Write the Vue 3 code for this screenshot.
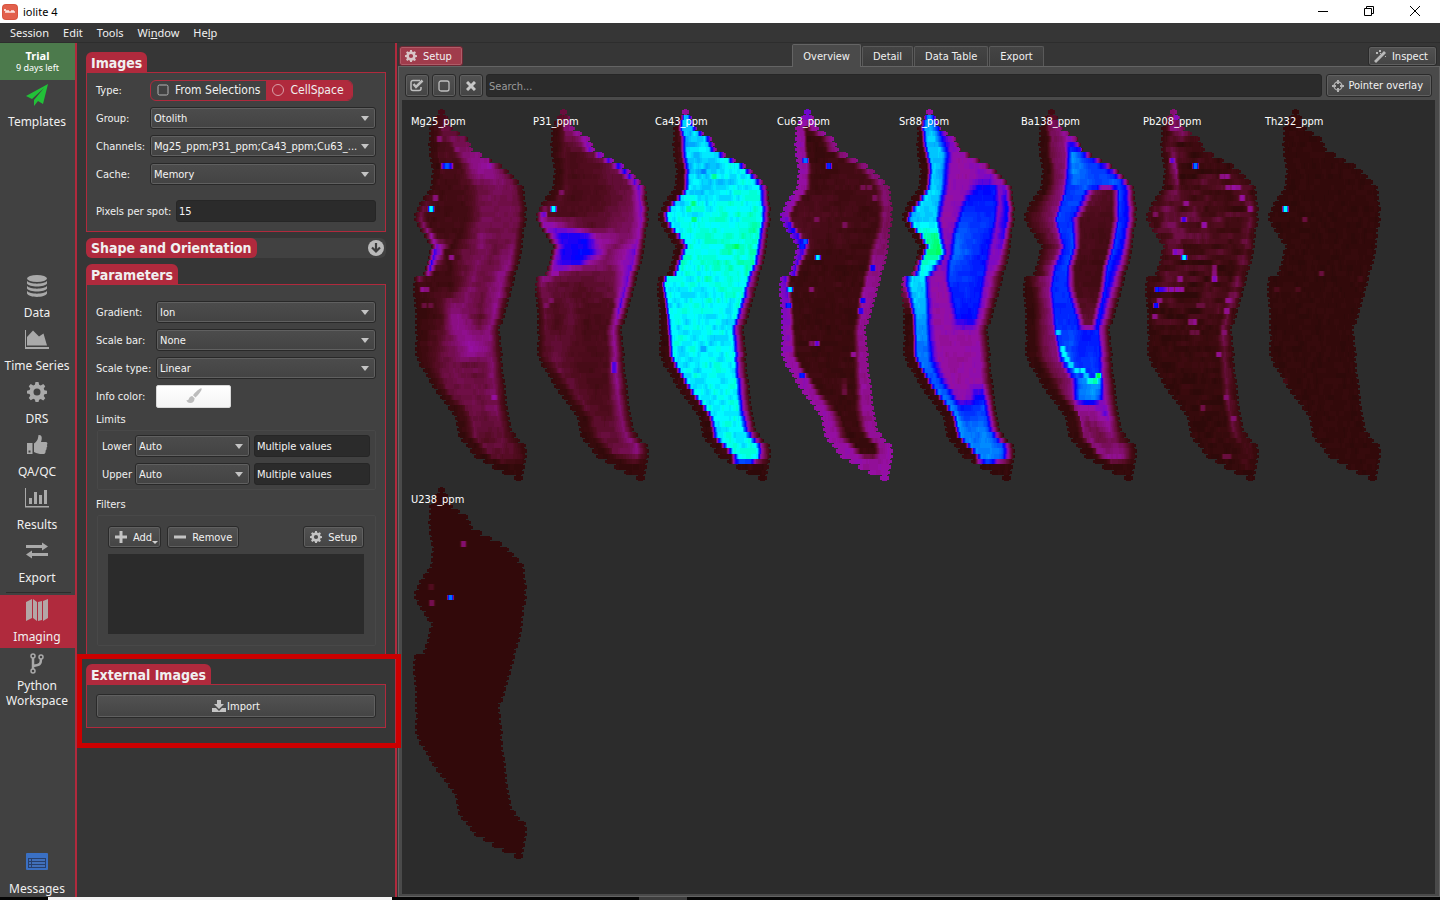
<script setup>
import { ref } from 'vue'

const menus = [
  ['Session', '', ''],
  ['Edit', '', ''],
  ['Tools', '', ''],
  ['Wi', 'n', 'dow'],
  ['He', 'l', 'p'],
]
const navItems = [
  { id: 'data', label: 'Data' },
  { id: 'series', label: 'Time Series' },
  { id: 'drs', label: 'DRS' },
  { id: 'qa', label: 'QA/QC' },
  { id: 'results', label: 'Results' },
  { id: 'export', label: 'Export' },
]
const tabs = ['Overview', 'Detail', 'Data Table', 'Export']
const activeTab = ref('Overview')
const pixelsPerSpot = ref('15')
const sourceType = ref('cell')

const gearPath =
  'M6.8 0h2.4l.5 2.2 1.3.6 2-1.2 1.6 1.7-1.2 1.9.5 1.3 2.1.5v2.3l-2.1.5-.5 1.3 1.2 1.9-1.6 1.7-2-1.2-1.3.6L9.200 16H6.8l-.5-2.100-1.300-.6-2 1.200-1.600-1.700 1.200-1.900-.5-1.300L0 9.200V6.900l2.100-.5.5-1.300L1.400 3.300 3 1.600l2 1.200 1.300-.6zM8 5.200a2.800 2.800 0 1 0 0 5.600 2.800 2.800 0 1 0 0-5.600z'

/* Section outline: left and right edge of each laser line, in thirds of a pixel */
const lefts = [115, 105, 95, 88, 87, 86, 85, 86, 88, 91, 94, 95, 92, 92, 90, 82, 70, 58, 50, 43, 43, 50, 60, 72, 82, 93, 88, 85, 80, 76, 70, 43, 38, 39, 40, 43, 43, 44, 46, 46, 46, 46, 47, 46, 46, 46, 50, 58, 68, 77, 87, 97, 108, 121, 133, 145, 157, 164, 167, 171, 173, 184, 197, 210, 222, 250, 277, 306, 343]
const rights = [134, 143, 150, 160, 180, 204, 212, 218, 245, 275, 306, 326, 341, 358, 371, 374, 374, 377, 380, 378, 380, 377, 373, 372, 369, 368, 365, 362, 360, 354, 347, 344, 342, 336, 333, 326, 323, 317, 314, 308, 301, 300, 302, 304, 306, 308, 306, 310, 310, 311, 314, 317, 317, 320, 321, 323, 326, 330, 333, 337, 347, 360, 377, 380, 380, 377, 375, 371, 368]

const ion = [
  [0, 46, 9, 9], [0.06, 60, 10, 14], [0.14, 82, 12, 32], [0.22, 112, 14, 72], [0.3, 136, 15, 122],
  [0.37, 150, 15, 164], [0.44, 120, 8, 200], [0.5, 60, 0, 235], [0.56, 0, 0, 255], [0.65, 0, 60, 255],
  [0.74, 0, 130, 255], [0.81, 0, 190, 255], [0.87, 0, 255, 255], [0.94, 0, 255, 160], [1, 0, 255, 70],
]
function ionColor(v) {
  let k = 1
  while (k < ion.length - 1 && ion[k][0] < v) k++
  const a = ion[k - 1]
  const b = ion[k]
  const t = Math.max(0, Math.min(1, (v - a[0]) / (b[0] - a[0])))
  return `rgb(${[1, 2, 3].map((c) => Math.round(a[c] + (b[c] - a[c]) * t)).join(',')})`
}

/*
 * keys: [line, positions, values]. A position below 90 counts from the left
 * edge, a negative one from the right edge, anything else is a plain x.
 * spots: [x, y, value], single hot shots.
 */
const channels = [
  {
    name: 'Mg25_ppm', noise: 0.02, streak: 0.02,
    keys: [
      [0, [0, 20, 30, 115, 125, -30, -12, -1], [0.1, 0.1, 0.1, 0.14, 0.14, 0.14, 0.14, 0.1]],
      [3, [0, 20, 35, 120, 130, -40, -12, -1], [0.03, 0.06, 0.13, 0.18, 0.18, 0.16, 0.18, 0.1]],
      [10, [0, 25, 110, 180, 215, 270, -20, -1], [0.03, 0.06, 0.11, 0.1, 0.31, 0.36, 0.22, 0.1]],
      [14, [0, 20, 130, 200, 230, 290, -25, -1], [0.03, 0.07, 0.08, 0.12, 0.2, 0.25, 0.2, 0.04]],
      [19, [0, 20, 40, 200, 250, 300, -25, -1], [0.06, 0.22, 0.07, 0.09, 0.22, 0.24, 0.22, 0.03]],
      [23, [0, 22, 40, 180, 240, 290, -30, -1], [0.03, 0.35, 0.1, 0.06, 0.26, 0.2, 0.22, 0.03]],
      [26, [0, 14, 32, 48, 240, 280, -30, -1], [0.05, 0.5, 0.42, 0.07, 0.26, 0.2, 0.28, 0.03]],
      [29, [0, 14, 32, 150, 230, 260, -34, -1], [0.05, 0.54, 0.12, 0.07, 0.25, 0.2, 0.31, 0.03]],
      [32, [0, 14, 32, 150, 210, 250, -38, -1], [0.03, 0.06, 0.07, 0.07, 0.25, 0.2, 0.33, 0.03]],
      [38, [0, 25, 120, 155, 185, 240, -32, -1], [0.02, 0.05, 0.09, 0.33, 0.3, 0.16, 0.33, 0.03]],
      [44, [0, 25, 120, 170, 210, 250, -32, -1], [0.02, 0.07, 0.18, 0.25, 0.38, 0.34, 0.26, 0.03]],
      [47, [0, 25, 130, 170, 210, 250, -32, -1], [0.02, 0.08, 0.2, 0.22, 0.2, 0.2, 0.27, 0.03]],
      [55, [0, 25, 50, 190, 220, 250, -34, -1], [0.02, 0.05, 0.16, 0.2, 0.22, 0.2, 0.24, 0.03]],
      [60, [0, 25, 50, 220, 240, 270, -38, -1], [0.02, 0.04, 0.18, 0.2, 0.16, 0.16, 0.18, 0.03]],
      [64, [0, 35, 50, 270, 290, 300, -45, -1], [0.02, 0.03, 0.14, 0.18, 0.18, 0.18, 0.17, 0.03]],
      [66, [0, 35, 50, 290, 300, 310, -45, -1], [0.02, 0.02, 0.02, 0.02, 0.02, 0.02, 0.02, 0.02]],
    ],
    spots: [[118, 298, 0.28], [172, 331, 0.28], [132, 378, 0.5], [150, 378, 0.5], [141, 378, 0.68], [93, 508, 0.87], [106, 475, 0.3], [154, 652, 0.33], [68, 750, 0.35], [80, 750, 0.3], [72, 798, 0.2], [92, 798, 0.2], [282, 1071, 0.36]],
  },
  {
    name: 'P31_ppm', noise: 0.015, streak: 0.015,
    keys: [
      [0, [0, 18, 30, 120, 125, -40, -18, -1], [0.2, 0.2, 0.2, 0.2, 0.2, 0.2, 0.2, 0.2]],
      [3, [0, 18, 35, 125, 140, -40, -18, -1], [0.03, 0.05, 0.15, 0.28, 0.28, 0.28, 0.32, 0.3]],
      [8, [0, 18, 40, 150, 180, -30, -16, -1], [0.03, 0.05, 0.14, 0.11, 0.13, 0.2, 0.46, 0.36]],
      [10, [0, 18, 40, 150, 200, -40, -18, -1], [0.03, 0.05, 0.14, 0.11, 0.13, 0.2, 0.54, 0.36]],
      [13, [0, 25, 40, 150, 240, -45, -20, -1], [0.03, 0.06, 0.14, 0.1, 0.14, 0.2, 0.5, 0.2]],
      [16, [0, 25, 40, 150, 260, -50, -22, -1], [0.03, 0.06, 0.14, 0.1, 0.14, 0.22, 0.44, 0.05]],
      [19, [0, 15, 30, 150, 260, -50, -22, -1], [0.1, 0.36, 0.14, 0.11, 0.17, 0.27, 0.42, 0.05]],
      [21, [0, 15, 40, 110, 200, -50, -22, -1], [0.04, 0.4, 0.4, 0.3, 0.15, 0.26, 0.4, 0.05]],
      [23, [0, 20, 40, 190, 225, -50, -22, -1], [0.04, 0.42, 0.53, 0.53, 0.34, 0.26, 0.4, 0.05]],
      [26, [0, 15, 35, 195, 235, 260, -28, -1], [0.05, 0.4, 0.55, 0.58, 0.42, 0.24, 0.44, 0.04]],
      [28, [0, 15, 35, 170, 205, 250, -28, -1], [0.05, 0.4, 0.5, 0.54, 0.35, 0.24, 0.46, 0.04]],
      [30, [0, 20, 40, 100, 170, -70, -28, -1], [0.15, 0.38, 0.36, 0.26, 0.18, 0.22, 0.46, 0.03]],
      [32, [0, 20, 40, 100, 170, -70, -28, -1], [0.1, 0.26, 0.2, 0.16, 0.15, 0.2, 0.46, 0.03]],
      [36, [0, 22, 100, 150, 190, -50, -28, -1], [0.02, 0.18, 0.12, 0.18, 0.12, 0.15, 0.5, 0.03]],
      [40, [0, 25, 100, 140, 190, -50, -26, -1], [0.02, 0.18, 0.12, 0.18, 0.1, 0.12, 0.36, 0.03]],
      [45, [0, 25, 100, 140, 200, -50, -28, -1], [0.02, 0.14, 0.22, 0.13, 0.1, 0.12, 0.34, 0.03]],
      [50, [0, 25, 50, 160, 200, -60, -30, -1], [0.02, 0.06, 0.18, 0.15, 0.1, 0.12, 0.32, 0.03]],
      [56, [0, 25, 50, 200, 240, -60, -30, -1], [0.02, 0.05, 0.18, 0.17, 0.13, 0.14, 0.28, 0.03]],
      [63, [0, 35, 60, 270, 290, -60, -35, -1], [0.02, 0.03, 0.16, 0.2, 0.2, 0.24, 0.3, 0.03]],
      [66, [0, 35, 60, 290, 300, -60, -35, -1], [0.03, 0.03, 0.03, 0.03, 0.03, 0.03, 0.03, 0.03]],
    ],
    spots: [[94, 508, 0.87], [66, 524, 0.45], [118, 460, 0.26], [87, 784, 0.26], [72, 798, 0.26], [276, 976, 0.48], [276, 991, 0.48]],
  },
  {
    name: 'Ca43_ppm', noise: 0.035, streak: 0.02,
    keys: [
      [0, [0, 10, 14, 16, 18, -30, -20, -12, -1], [0.36, 0.36, 0.36, 0.36, 0.36, 0.36, 0.36, 0.36, 0.36]],
      [1, [0, 4, 8, 12, 15, -12, -8, -4, -1], [0.03, 0.1, 0.35, 0.55, 0.82, 0.82, 0.6, 0.5, 0.4]],
      [5, [0, 22, 28, 34, 40, -22, -14, -8, -1], [0.03, 0.06, 0.35, 0.55, 0.8, 0.83, 0.55, 0.45, 0.3]],
      [10, [0, 22, 28, 34, 42, -24, -18, -10, -1], [0.03, 0.06, 0.35, 0.55, 0.81, 0.87, 0.6, 0.45, 0.3]],
      [15, [0, 28, 34, 40, 46, -28, -20, -10, -1], [0.03, 0.06, 0.35, 0.55, 0.84, 0.88, 0.55, 0.36, 0.1]],
      [19, [0, 12, 18, 23, 28, -28, -20, -12, -1], [0.03, 0.06, 0.35, 0.55, 0.87, 0.9, 0.55, 0.36, 0.05]],
      [24, [0, 22, 30, 36, 42, -30, -22, -15, -1], [0.03, 0.06, 0.35, 0.55, 0.88, 0.91, 0.55, 0.36, 0.05]],
      [28, [0, 14, 20, 26, 32, -32, -24, -16, -1], [0.03, 0.06, 0.35, 0.55, 0.88, 0.91, 0.55, 0.36, 0.05]],
      [32, [0, 14, 17, 21, 26, -38, -30, -22, -1], [0.03, 0.1, 0.35, 0.55, 0.86, 0.9, 0.55, 0.36, 0.05]],
      [38, [0, 20, 23, 27, 33, -38, -30, -22, -1], [0.02, 0.04, 0.35, 0.55, 0.87, 0.86, 0.55, 0.36, 0.03]],
      [46, [0, 28, 33, 38, 44, -38, -30, -22, -1], [0.02, 0.04, 0.35, 0.55, 0.86, 0.86, 0.55, 0.36, 0.03]],
      [55, [0, 28, 33, 38, 44, -42, -32, -22, -1], [0.02, 0.04, 0.35, 0.55, 0.86, 0.87, 0.6, 0.36, 0.03]],
      [61, [0, 30, 36, 42, 50, -42, -30, -22, -1], [0.02, 0.04, 0.35, 0.6, 0.86, 0.87, 0.6, 0.36, 0.03]],
      [64, [0, 38, 45, 52, 60, -40, -34, -28, -1], [0.02, 0.04, 0.35, 0.55, 0.87, 0.87, 0.55, 0.36, 0.03]],
      [65, [0, 10, 18, 24, 36, -58, -50, -40, -1], [0.02, 0.03, 0.35, 0.5, 0.66, 0.66, 0.5, 0.3, 0.03]],
      [66, [0, 38, 45, 52, 60, -40, -34, -28, -1], [0.02, 0.02, 0.02, 0.02, 0.02, 0.02, 0.02, 0.02, 0.02]],
    ],
    spots: [[150, 540, 0.97], [148, 492, 0.96], [134, 508, 0.94], [278, 620, 0.98], [210, 411, 0.95], [178, 395, 0.74], [178, 926, 0.78]],
  },
  {
    name: 'Cu63_ppm', noise: 0.02, streak: 0.02,
    keys: [
      [0, [0, 28, 40, 120, -50, -25, -1], [0.46, 0.46, 0.46, 0.46, 0.46, 0.46, 0.46]],
      [3, [0, 20, 32, 125, -35, -22, -1], [0.35, 0.36, 0.08, 0.08, 0.14, 0.34, 0.36]],
      [5, [0, 28, 38, 150, -40, -22, -1], [0.38, 0.36, 0.05, 0.04, 0.06, 0.28, 0.35]],
      [14, [0, 28, 44, 150, -45, -20, -1], [0.38, 0.36, 0.1, 0.07, 0.1, 0.28, 0.26]],
      [19, [0, 22, 34, 150, -45, -25, -1], [0.42, 0.4, 0.1, 0.12, 0.07, 0.27, 0.24]],
      [22, [0, 24, 38, 150, -45, -25, -1], [0.42, 0.56, 0.16, 0.1, 0.07, 0.28, 0.24]],
      [26, [0, 22, 40, 150, -60, -40, -1], [0.4, 0.5, 0.12, 0.07, 0.08, 0.3, 0.28]],
      [29, [0, 12, 28, 150, -55, -38, -1], [0.4, 0.5, 0.08, 0.05, 0.06, 0.34, 0.3]],
      [34, [0, 24, 38, 150, -55, -42, -1], [0.4, 0.46, 0.06, 0.06, 0.07, 0.36, 0.33]],
      [40, [0, 26, 40, 150, -40, -22, -1], [0.42, 0.38, 0.06, 0.05, 0.05, 0.33, 0.33]],
      [50, [0, 38, 55, 190, -50, -30, -1], [0.37, 0.36, 0.05, 0.06, 0.05, 0.34, 0.33]],
      [57, [0, 30, 60, 220, -60, -35, -1], [0.37, 0.34, 0.1, 0.04, 0.04, 0.32, 0.34]],
      [63, [0, 50, 70, 270, -55, -38, -1], [0.37, 0.36, 0.12, 0.04, 0.04, 0.32, 0.37]],
      [65, [0, 50, 70, 280, -65, -40, -1], [0.37, 0.36, 0.37, 0.37, 0.37, 0.36, 0.37]],
      [68, [0, 50, 70, 280, -65, -40, -1], [0.37, 0.37, 0.37, 0.37, 0.37, 0.37, 0.37]],
    ],
    spots: [[118, 362, 0.72], [188, 378, 0.62], [155, 652, 0.86], [118, 605, 0.68], [108, 620, 0.6], [72, 750, 0.85], [68, 798, 0.62], [108, 1008, 0.6], [290, 783, 0.55], [284, 814, 0.52], [320, 686, 0.55], [152, 911, 0.46], [136, 911, 0.26], [262, 943, 0.35], [136, 750, 0.28], [152, 540, 0.25], [236, 556, 0.25], [326, 475, 0.25], [235, 1061, 0.2], [235, 1045, 0.17], [235, 1029, 0.13], [290, 443, 0.24], [310, 443, 0.24]],
  },
  {
    name: 'Sr88_ppm', noise: 0.02, streak: 0.01,
    keys: [
      [0, [0, 4, 8, 10, 117, 120, 122, 124, 125, 126, 127, -5, -1], [0.36, 0.36, 0.36, 0.36, 0.36, 0.36, 0.36, 0.36, 0.36, 0.36, 0.36, 0.36, 0.36]],
      [1, [0, 4, 9, 14, 122, 124, 126, 128, 130, 132, 134, -5, -1], [0.1, 0.3, 0.6, 0.76, 0.76, 0.76, 0.76, 0.74, 0.7, 0.7, 0.6, 0.5, 0.45]],
      [4, [0, 12, 20, 28, 130, 145, 155, 158, 160, 162, 164, -8, -1], [0.03, 0.05, 0.5, 0.8, 0.82, 0.74, 0.6, 0.55, 0.5, 0.5, 0.45, 0.4, 0.3]],
      [8, [0, 20, 30, 37, 165, 180, 195, 210, 215, 220, 230, -15, -1], [0.02, 0.03, 0.5, 0.82, 0.8, 0.55, 0.38, 0.37, 0.37, 0.37, 0.37, 0.33, 0.15]],
      [12, [0, 22, 32, 40, 160, 172, 185, 230, 260, 290, 310, -18, -1], [0.02, 0.03, 0.5, 0.82, 0.79, 0.55, 0.39, 0.36, 0.38, 0.42, 0.42, 0.36, 0.1]],
      [14, [0, 22, 30, 38, 158, 170, 185, 240, 270, 318, 332, -20, -1], [0.02, 0.05, 0.5, 0.84, 0.8, 0.54, 0.38, 0.4, 0.55, 0.57, 0.42, 0.44, 0.1]],
      [17, [0, 22, 32, 42, 148, 160, 172, 215, 235, 320, 335, -22, -1], [0.02, 0.05, 0.55, 0.85, 0.8, 0.54, 0.38, 0.42, 0.6, 0.6, 0.42, 0.58, 0.08]],
      [20, [0, 10, 17, 25, 142, 150, 162, 200, 220, 315, 328, -24, -1], [0.02, 0.05, 0.55, 0.8, 0.83, 0.55, 0.37, 0.4, 0.66, 0.62, 0.42, 0.56, 0.06]],
      [23, [0, 20, 28, 36, 150, 158, 170, 188, 205, 305, 322, -26, -1], [0.02, 0.05, 0.6, 0.94, 0.95, 0.58, 0.4, 0.42, 0.7, 0.58, 0.42, 0.5, 0.04]],
      [26, [0, 14, 22, 30, 158, 170, 178, 185, 200, 295, 312, -28, -1], [0.02, 0.05, 0.6, 0.96, 0.97, 0.58, 0.42, 0.46, 0.72, 0.58, 0.42, 0.42, 0.04]],
      [28, [0, 10, 16, 22, 140, 155, 165, 175, 190, 290, 305, -30, -1], [0.04, 0.3, 0.6, 0.92, 0.86, 0.55, 0.4, 0.44, 0.68, 0.58, 0.42, 0.4, 0.04]],
      [31, [0, 8, 16, 30, 108, 118, 130, 168, 185, 280, 295, -38, -1], [0.3, 0.4, 0.6, 0.85, 0.84, 0.5, 0.38, 0.38, 0.64, 0.6, 0.42, 0.37, 0.04]],
      [38, [0, 24, 32, 40, 112, 124, 138, 188, 208, 262, 275, -32, -1], [0.02, 0.03, 0.5, 0.78, 0.77, 0.5, 0.37, 0.37, 0.58, 0.58, 0.42, 0.38, 0.02]],
      [41, [0, 26, 34, 40, 114, 126, 142, 188, 208, 245, 260, -32, -1], [0.02, 0.03, 0.5, 0.76, 0.75, 0.5, 0.37, 0.37, 0.38, 0.38, 0.38, 0.38, 0.02]],
      [46, [0, 28, 36, 44, 118, 136, 154, 195, 210, 245, 260, -32, -1], [0.02, 0.03, 0.5, 0.72, 0.7, 0.5, 0.36, 0.36, 0.36, 0.37, 0.38, 0.38, 0.02]],
      [50, [0, 28, 36, 44, 150, 164, 180, 205, 220, 245, 260, -34, -1], [0.02, 0.03, 0.5, 0.68, 0.66, 0.5, 0.37, 0.36, 0.36, 0.37, 0.38, 0.38, 0.02]],
      [53, [0, 28, 36, 44, 185, 198, 208, 218, 225, 245, 262, -34, -1], [0.02, 0.03, 0.5, 0.72, 0.66, 0.52, 0.4, 0.38, 0.38, 0.42, 0.55, 0.56, 0.02]],
      [55, [0, 28, 36, 44, 205, 210, 218, 228, 240, 255, 270, -36, -1], [0.02, 0.03, 0.5, 0.75, 0.7, 0.62, 0.6, 0.6, 0.6, 0.62, 0.64, 0.66, 0.02]],
      [59, [0, 28, 36, 44, 220, 230, 240, 250, 260, 275, 285, -36, -1], [0.02, 0.03, 0.5, 0.78, 0.76, 0.74, 0.72, 0.72, 0.72, 0.74, 0.76, 0.66, 0.02]],
      [64, [0, 38, 48, 58, 280, 285, 290, 295, 300, 305, 315, -38, -1], [0.02, 0.03, 0.5, 0.72, 0.72, 0.72, 0.72, 0.74, 0.76, 0.74, 0.74, 0.7, 0.02]],
      [65, [0, 10, 20, 34, 290, 295, 300, 305, 310, 312, 315, -50, -1], [0.02, 0.03, 0.35, 0.5, 0.58, 0.62, 0.64, 0.64, 0.6, 0.56, 0.55, 0.4, 0.02]],
      [66, [0, 38, 48, 58, 280, 285, 290, 295, 300, 305, 315, -30, -1], [0.02, 0.02, 0.02, 0.02, 0.02, 0.02, 0.02, 0.02, 0.02, 0.02, 0.02, 0.02, 0.02]],
    ],
    spots: [],
  },
  {
    name: 'Ba138_ppm', noise: 0.018, streak: 0.01,
    keys: [
      [0, [0, 4, 8, 118, 120, 121, 122, 123, 124, 125, 126, -5, -1], [0.08, 0.08, 0.08, 0.08, 0.08, 0.08, 0.08, 0.08, 0.08, 0.08, 0.08, 0.08, 0.08]],
      [2, [0, 12, 22, 120, 124, 126, 128, 130, 132, 134, 136, -6, -1], [0.03, 0.05, 0.2, 0.26, 0.26, 0.26, 0.26, 0.24, 0.24, 0.22, 0.22, 0.2, 0.12]],
      [5, [0, 25, 40, 155, 165, 172, 178, 182, 185, 188, 190, -6, -1], [0.02, 0.03, 0.24, 0.28, 0.34, 0.38, 0.4, 0.4, 0.38, 0.36, 0.34, 0.28, 0.12]],
      [8, [0, 22, 35, 165, 178, 186, 194, 202, 210, 218, 225, -14, -1], [0.02, 0.03, 0.22, 0.3, 0.62, 0.76, 0.74, 0.7, 0.66, 0.62, 0.56, 0.4, 0.12]],
      [13, [0, 22, 45, 160, 172, 190, 240, 260, 290, 310, 330, -22, -1], [0.02, 0.03, 0.22, 0.3, 0.6, 0.72, 0.68, 0.66, 0.66, 0.68, 0.66, 0.55, 0.12]],
      [14, [0, 20, 45, 156, 170, 225, 260, 275, 298, 312, 326, -25, -1], [0.02, 0.03, 0.22, 0.3, 0.62, 0.68, 0.58, 0.4, 0.38, 0.55, 0.66, 0.55, 0.08]],
      [15, [0, 20, 45, 155, 168, 218, 240, 256, 305, 318, 328, -25, -1], [0.02, 0.03, 0.22, 0.3, 0.62, 0.68, 0.38, 0.2, 0.14, 0.36, 0.66, 0.55, 0.06]],
      [20, [0, 25, 60, 130, 142, 182, 198, 212, 305, 318, 328, -28, -1], [0.03, 0.12, 0.2, 0.3, 0.66, 0.62, 0.36, 0.12, 0.1, 0.36, 0.64, 0.55, 0.05]],
      [25, [0, 22, 50, 150, 165, 188, 200, 212, 292, 304, 314, -30, -1], [0.03, 0.12, 0.22, 0.3, 0.58, 0.68, 0.36, 0.11, 0.09, 0.36, 0.64, 0.55, 0.05]],
      [29, [0, 15, 40, 125, 138, 168, 182, 195, 274, 284, 294, -34, -1], [0.03, 0.12, 0.25, 0.33, 0.6, 0.64, 0.36, 0.1, 0.08, 0.36, 0.62, 0.5, 0.03]],
      [33, [0, 25, 50, 114, 128, 168, 184, 198, 265, 276, 286, -38, -1], [0.02, 0.03, 0.2, 0.32, 0.62, 0.64, 0.36, 0.1, 0.1, 0.36, 0.6, 0.5, 0.02]],
      [39, [0, 25, 50, 124, 138, 200, 214, 224, 243, 252, 264, -32, -1], [0.02, 0.03, 0.2, 0.3, 0.62, 0.62, 0.36, 0.18, 0.18, 0.36, 0.6, 0.46, 0.02]],
      [41, [0, 25, 50, 130, 142, 195, 210, 222, 245, 254, 264, -32, -1], [0.02, 0.03, 0.2, 0.3, 0.66, 0.64, 0.6, 0.58, 0.58, 0.6, 0.62, 0.45, 0.02]],
      [46, [0, 30, 55, 142, 156, 170, 210, 222, 245, 255, 266, -30, -1], [0.02, 0.03, 0.2, 0.28, 0.6, 0.7, 0.62, 0.62, 0.64, 0.62, 0.6, 0.4, 0.02]],
      [49, [0, 30, 58, 170, 185, 200, 215, 230, 250, 260, 268, -32, -1], [0.02, 0.03, 0.2, 0.28, 0.55, 0.68, 0.64, 0.62, 0.64, 0.64, 0.62, 0.37, 0.02]],
      [50, [0, 30, 58, 180, 195, 205, 215, 230, 250, 260, 268, -32, -1], [0.02, 0.03, 0.2, 0.28, 0.55, 0.7, 0.74, 0.76, 0.8, 0.82, 0.8, 0.37, 0.02]],
      [53, [0, 30, 45, 185, 198, 208, 218, 230, 250, 260, 268, -34, -1], [0.02, 0.03, 0.2, 0.32, 0.58, 0.7, 0.72, 0.74, 0.76, 0.72, 0.66, 0.37, 0.02]],
      [54, [0, 30, 45, 190, 200, 210, 220, 230, 250, 260, 270, -34, -1], [0.02, 0.03, 0.2, 0.3, 0.44, 0.5, 0.55, 0.58, 0.54, 0.48, 0.44, 0.36, 0.02]],
      [55, [0, 30, 45, 190, 200, 210, 220, 230, 250, 260, 270, -34, -1], [0.02, 0.03, 0.16, 0.28, 0.34, 0.36, 0.36, 0.38, 0.38, 0.4, 0.42, 0.42, 0.02]],
      [58, [0, 30, 45, 195, 215, 225, 235, 245, 255, 262, 270, -36, -1], [0.02, 0.03, 0.18, 0.26, 0.33, 0.24, 0.2, 0.26, 0.24, 0.28, 0.3, 0.38, 0.02]],
      [61, [0, 30, 45, 215, 230, 245, 255, 265, 275, 285, 300, -44, -1], [0.02, 0.03, 0.18, 0.28, 0.26, 0.3, 0.24, 0.2, 0.2, 0.22, 0.26, 0.24, 0.02]],
      [64, [0, 36, 50, 280, 285, 290, 295, 305, 315, 325, 335, -40, -1], [0.02, 0.03, 0.2, 0.3, 0.34, 0.32, 0.34, 0.32, 0.34, 0.34, 0.32, 0.3, 0.02]],
      [66, [0, 36, 50, 280, 285, 290, 295, 305, 315, 325, 335, -30, -1], [0.02, 0.02, 0.02, 0.02, 0.02, 0.02, 0.02, 0.02, 0.02, 0.02, 0.02, 0.02, 0.02]],
    ],
    spots: [[144, 876, 0.83], [158, 927, 0.86], [163, 943, 0.87], [171, 959, 0.85], [182, 975, 0.84], [200, 991, 0.85], [218, 991, 0.87], [228, 1001, 0.82], [265, 1008, 1], [254, 1024, 0.94], [240, 1024, 0.9], [284, 1121, 0.46]],
  },
  {
    name: 'Pb208_ppm', noise: 0.03, streak: 0.08, streakEnd: 40,
    keys: [
      [0, [0, 20, 35, 120, -50, -25, -1], [0.3, 0.3, 0.3, 0.3, 0.3, 0.3, 0.3]],
      [3, [0, 15, 25, 110, -30, -15, -1], [0.03, 0.08, 0.2, 0.26, 0.28, 0.25, 0.2]],
      [6, [0, 18, 30, 140, -50, -25, -1], [0.02, 0.1, 0.14, 0.08, 0.06, 0.06, 0.05]],
      [10, [0, 18, 35, 140, -50, -25, -1], [0.02, 0.1, 0.32, 0.06, 0.08, 0.12, 0.05]],
      [15, [0, 30, 50, 150, -50, -25, -1], [0.02, 0.14, 0.2, 0.1, 0.12, 0.12, 0.04]],
      [22, [0, 30, 60, 150, -50, -25, -1], [0.1, 0.16, 0.24, 0.16, 0.1, 0.2, 0.04]],
      [28, [0, 20, 60, 150, -50, -28, -1], [0.06, 0.1, 0.14, 0.1, 0.08, 0.18, 0.03]],
      [34, [0, 25, 60, 150, -50, -28, -1], [0.02, 0.06, 0.08, 0.08, 0.07, 0.25, 0.03]],
      [40, [0, 30, 60, 150, -45, -28, -1], [0.02, 0.04, 0.05, 0.06, 0.05, 0.2, 0.03]],
      [50, [0, 30, 60, 170, -50, -32, -1], [0.02, 0.03, 0.04, 0.03, 0.03, 0.19, 0.03]],
      [57, [0, 30, 60, 220, -50, -32, -1], [0.02, 0.03, 0.04, 0.03, 0.03, 0.22, 0.03]],
      [62, [0, 30, 60, 270, -60, -38, -1], [0.02, 0.02, 0.03, 0.03, 0.04, 0.12, 0.03]],
      [68, [0, 30, 60, 270, -60, -38, -1], [0.02, 0.02, 0.02, 0.02, 0.02, 0.02, 0.02]],
    ],
    spots: [[190, 378, 0.72], [120, 362, 0.46], [132, 235, 0.42], [156, 653, 0.86], [155, 540, 0.5], [162, 492, 0.34], [285, 411, 0.33], [270, 411, 0.32], [305, 443, 0.37], [288, 443, 0.34], [318, 443, 0.34], [330, 475, 0.36], [354, 508, 0.33], [216, 556, 0.38], [70, 524, 0.26], [136, 750, 0.4], [118, 750, 0.4], [148, 750, 0.36], [100, 750, 0.44], [76, 750, 0.62], [88, 750, 0.5], [72, 798, 0.58], [68, 830, 0.32], [82, 783, 0.32], [247, 717, 0.42], [247, 700, 0.3], [247, 684, 0.28], [144, 717, 0.34], [130, 636, 0.44], [145, 636, 0.36], [187, 847, 0.33], [175, 847, 0.28], [200, 798, 0.2], [212, 798, 0.2], [180, 878, 0.2], [195, 878, 0.2], [260, 944, 0.34], [212, 1104, 0.22], [288, 783, 0.34], [284, 814, 0.34], [276, 879, 0.28], [282, 1071, 0.28], [305, 1137, 0.28], [278, 1249, 0.2], [290, 1249, 0.2], [300, 765, 0.22]],
  },
  {
    name: 'Th232_ppm', noise: 0.018, streak: 0,
    keys: [[0, [0, -1], [0.02, 0.02]], [68, [0, -1], [0.02, 0.02]]],
    spots: [[94, 508, 0.88], [152, 540, 0.2], [202, 702, 0.2], [68, 750, 0.12], [132, 750, 0.12], [318, 717, 0.08], [92, 1024, 0.09]],
  },
  {
    name: 'U238_ppm', noise: 0, streak: 0,
    keys: [[0, [0, -1], [0.02, 0.02]], [68, [0, -1], [0.02, 0.02]]],
    spots: [[190, 378, 0.28], [93, 508, 0.13], [95, 556, 0.24], [151, 540, 0.72]],
  },
]

function hash(a, b, c) {
  const s = Math.sin(a * 127.1 + b * 311.7 + c * 74.7) * 43758.5453
  return (s - Math.floor(s)) * 2 - 1
}
const lerp = (a, b, t) => a + (b - a) * t
function ripple(row, x, c) {
  const i = Math.floor(x)
  return lerp(hash(row, i, c), hash(row, i + 1, c), x - i)
}
const place = (p, row) => {
  if (p < 0) return rights[row] + p
  if (p < 90) return lefts[row] + p
  return p
}

/* Collects the cells of one element map into a single path per colour level */
function buildMap(channel, index) {
  const levels = new Map()
  const add = (v, d) => {
    const q = Math.round(Math.max(0, Math.min(1, v)) * 60)
    levels.set(q, (levels.get(q) || '') + d)
  }
  let k = 0
  for (let row = 0; row < 69; row++) {
    while (k < channel.keys.length - 2 && channel.keys[k + 1][0] <= row) k++
    const [ra, pa, va] = channel.keys[k]
    const [rb, pb, vb] = channel.keys[k + 1]
    const t = Math.min(1, (row - ra) / (rb - ra))
    const xs = []
    const vs = []
    pa.forEach((p, n) => {
      const x = lerp(place(p, row), place(pb[n], row), t)
      xs.push(n ? Math.max(x, xs[n - 1] + 1) : x)
      vs.push(lerp(va[n], vb[n], t))
    })
    const x0 = Math.round(lefts[row] / 3 - 2)
    const x1 = Math.round(rights[row] / 3 - 2)
    const y0 = Math.round(9.4 + row * 5.38)
    const y1 = Math.round(9.4 + (row + 1) * 5.38)
    const streak = row < (channel.streakEnd || 99) ? channel.streak : 0.02
    const hot = channel.spots.filter((s) => Math.round((s[1] - 216) / 16.15) === row)
    for (let x = x0; x < x1; x++) {
      const zx = (x + 2) * 3 + 1
      let n = 1
      while (n < xs.length - 1 && xs[n] < zx) n++
      const f = Math.max(0, Math.min(1, (zx - xs[n - 1]) / (xs[n] - xs[n - 1])))
      const inner = Math.min(x - x0, x1 - x) > 4 ? 1 : 0.3
      let v =
        lerp(vs[n - 1], vs[n], f) +
        ripple(row, x / 4, index) * channel.noise * inner +
        ripple(row, x / 12, index + 20) * streak * inner
      for (const s of hot) v = lerp(v, s[2], Math.exp(-(((zx - s[0]) / 9) ** 4)))
      const edge = x < x0 + 2 || x + 2 >= x1
      const top = edge ? y0 + 1 : y0
      const h = edge ? y1 - y0 - 2 : y1 - y0
      add(v, `M${x} ${top}h1v${h}h-1z`)
    }
  }
  return {
    name: channel.name,
    paths: [...levels].map(([q, d]) => ({ d, fill: ionColor(q / 60) })),
  }
}
const maps = channels.map(buildMap)
</script>

<template>
  <div class="window">
    <header class="titlebar">
      <svg class="app-icon" width="16" height="16" viewBox="0 0 16 16">
        <rect width="16" height="16" rx="4" fill="#d9543f" />
        <rect x="1" y="1" width="14" height="14" rx="3" fill="#e2604c" />
        <path d="M3 8h10M4 7h3M9 7h3" stroke="#fbe3de" stroke-width="1.500" />
        <circle cx="3" cy="6" r="1" fill="#fff" />
      </svg>
      <span class="app-title">iolite 4</span>
      <div class="window-buttons">
        <button aria-label="Minimize"><svg width="12" height="12" viewBox="0 0 12 12"><path d="M1 6.500h10" stroke="#000" fill="none" /></svg></button>
        <button aria-label="Restore"><svg width="12" height="12" viewBox="0 0 12 12"><path d="M1.500 3.500h7v7h-7zM3.500 3.500v-2h7v7h-2" stroke="#000" fill="none" /></svg></button>
        <button aria-label="Close"><svg width="12" height="12" viewBox="0 0 12 12"><path d="M1 1l10 10M11 1L1 11" stroke="#000" fill="none" /></svg></button>
      </div>
    </header>

    <nav class="menubar">
      <button v-for="m in menus" :key="m[0]">{{ m[0] }}<u v-if="m[1]">{{ m[1] }}</u>{{ m[2] }}</button>
    </nav>

    <div class="workspace">
      <aside class="sidebar">
        <div class="trial"><strong>Trial</strong><span>9 days left</span></div>
        <button class="nav templates">
          <svg width="24" height="24" viewBox="0 0 24 24" fill="#22c138"><path d="M23 1L1 13l6 3L19 5 9 17v6l4-5 5 3z" /></svg>
          <span>Templates</span>
        </button>
        <div class="spacer"></div>
        <button v-for="item in navItems" :key="item.id" class="nav">
          <svg width="24" height="24" viewBox="0 0 24 24" fill="#a9a9a9">
            <g v-if="item.id === 'data'">
              <ellipse cx="12" cy="4.500" rx="10" ry="3.500" />
              <path d="M2 7c3 3.500 17 3.500 20 0v2.500c-2 4-18 4-20 0zM2 12c3 3.500 17 3.500 20 0v2.500c-2 4-18 4-20 0zM2 17c3 3.500 17 3.500 20 0v2.500c-2 4.500-18 4.500-20 0z" />
            </g>
            <path v-else-if="item.id === 'series'" d="M0 3h1v17h23v2H0zM2 18.500V10l6-6.500 6 6 4.500-3L22 18.500z" />
            <path v-else-if="item.id === 'drs'" transform="translate(2 2) scale(1.250)" fill-rule="evenodd" :d="gearPath" />
            <path v-else-if="item.id === 'qa'" fill-rule="evenodd" d="M2 10h5.500v11H2zM3.500 17.500v2h2v-2zM9 10.500c3-2 4-4 4.500-8.500 3.500-.5 4 3 2.500 7h5c2 .3 1.500 2.500.8 3 .8 1 .5 2.300-.4 2.800.5 1.200 0 2.200-.8 2.700.2 3-1 3.500-3 3.500-4 0-5.500-.5-8.600-2z" />
            <path v-else-if="item.id === 'results'" d="M0 2h1v18h23v1.500H0zM4 12h3v6H4zM9 6h3v12H9zM14 9h3v9h-3zM19 4h3v14h-3z" />
            <path v-else d="M1 6h16V3.500L23 7.500l-6 4V9H1zM23 14H7v-2.500l-6 4 6 4V17h16z" />
          </svg>
          <span>{{ item.label }}</span>
        </button>
        <hr />
        <button class="nav current">
          <svg width="24" height="24" viewBox="0 0 24 24" fill="#b4a6a6"><path d="M1 4l6-3v19l-6 3zM8 1l4 3v19l-4-3zM13 4l4-1v19l-4 1zM18 3l5-2v19l-5 3z" /></svg>
          <span>Imaging</span>
        </button>
        <button class="nav python">
          <svg width="24" height="24" viewBox="0 0 24 24" fill="none" stroke="#a9a9a9" stroke-width="1.500"><circle cx="8" cy="5" r="2" /><circle cx="8" cy="20" r="2" /><circle cx="16" cy="6" r="2" /><path d="M8 7v11M8 15c7-1 8-2 8-7" stroke-width="2.500" /></svg>
          <span>Python<br />Workspace</span>
        </button>
        <div class="spacer"></div>
        <button class="nav messages">
          <svg width="24" height="24" viewBox="0 0 24 24"><rect x="1" y="3" width="22" height="17" rx="1" fill="#3a70c4" /><path d="M3 8h18v10H3z" fill="#28406c" /><path d="M4 10h2m1 0h13M4 13h2m1 0h13M4 16h2m1 0h13" stroke="#4a80d4" stroke-width="1.500" /></svg>
          <span>Messages</span>
        </button>
      </aside>

      <section class="setup">
        <h2 class="tab-title">Images</h2>
        <div class="group images">
          <div class="row type-row">
            <span class="lbl w55">Type:</span>
            <div class="toggle">
              <label><input v-model="sourceType" type="radio" name="source" value="sel" /><svg width="12" height="12" viewBox="0 0 12 12" fill="none" stroke="#b4b4b4"><rect x="1" y="1" width="10" height="10" rx="1.500" /></svg>From Selections</label>
              <label class="on"><input v-model="sourceType" type="radio" name="source" value="cell" /><svg width="12" height="12" viewBox="0 0 12 12" fill="none" stroke="#d8a0a8"><circle cx="6" cy="6" r="5.500" /></svg>CellSpace</label>
            </div>
          </div>
          <div class="row"><label class="lbl w55" for="group">Group:</label><div class="select"><select id="group"><option>Otolith</option></select><svg width="8" height="5" viewBox="0 0 8 5"><path d="M0 0h8L4 5z" /></svg></div></div>
          <div class="row"><label class="lbl w55" for="chan">Channels:</label><div class="select"><select id="chan"><option>Mg25_ppm;P31_ppm;Ca43_ppm;Cu63_...</option></select><svg width="8" height="5" viewBox="0 0 8 5"><path d="M0 0h8L4 5z" /></svg></div></div>
          <div class="row"><label class="lbl w55" for="cache">Cache:</label><div class="select"><select id="cache"><option>Memory</option></select><svg width="8" height="5" viewBox="0 0 8 5"><path d="M0 0h8L4 5z" /></svg></div></div>
          <div class="row spot-row"><label class="lbl w81" for="pps">Pixels per spot:</label><input id="pps" v-model="pixelsPerSpot" class="field" type="text" /></div>
        </div>

        <div class="collapsed">
          <h2>Shape and Orientation</h2>
          <button aria-label="Expand"><svg width="16" height="16" viewBox="0 0 16 16"><circle cx="8" cy="8" r="8" fill="#b9b9b9" /><path d="M8 3v8M4 7.500l4 4 4-4" fill="none" stroke="#3c3c3c" stroke-width="2.200" /></svg></button>
        </div>

        <h2 class="tab-title">Parameters</h2>
        <div class="group params">
          <div class="row"><label class="lbl w61" for="grad">Gradient:</label><div class="select"><select id="grad"><option>Ion</option></select><svg width="8" height="5" viewBox="0 0 8 5"><path d="M0 0h8L4 5z" /></svg></div></div>
          <div class="row"><label class="lbl w61" for="bar">Scale bar:</label><div class="select"><select id="bar"><option>None</option></select><svg width="8" height="5" viewBox="0 0 8 5"><path d="M0 0h8L4 5z" /></svg></div></div>
          <div class="row"><label class="lbl w61" for="stype">Scale type:</label><div class="select"><select id="stype"><option>Linear</option></select><svg width="8" height="5" viewBox="0 0 8 5"><path d="M0 0h8L4 5z" /></svg></div></div>
          <div class="row">
            <span class="lbl w61">Info color:</span>
            <button class="swatch" aria-label="Info color"><svg width="16" height="16" viewBox="0 0 16 16" fill="#bcbcbc"><path d="M15.500.5c1 1-3 6.500-6 9L7 7.200C9.500 4 14.500-.5 15.500.5zM6.200 8l2.400 2.300c0 3-1.600 4.700-4.300 4.700-2 0-3.500-1-3.800-3 1.500.5 2-.3 2.500-1.500C3.500 9 5 8 6.200 8z" /></svg></button>
          </div>
          <div class="caption">Limits</div>
          <div class="frame limits">
            <div class="row"><label class="lbl w34" for="lo">Lower</label><div class="select short"><select id="lo"><option>Auto</option></select><svg width="8" height="5" viewBox="0 0 8 5"><path d="M0 0h8L4 5z" /></svg></div><input class="field" type="text" aria-label="Lower limit" value="Multiple values" /></div>
            <div class="row"><label class="lbl w34" for="up">Upper</label><div class="select short"><select id="up"><option>Auto</option></select><svg width="8" height="5" viewBox="0 0 8 5"><path d="M0 0h8L4 5z" /></svg></div><input class="field" type="text" aria-label="Upper limit" value="Multiple values" /></div>
          </div>
          <div class="caption filters-caption">Filters</div>
          <div class="frame filters">
            <div class="filter-buttons">
              <button class="btn add"><svg width="12" height="12" viewBox="0 0 12 12" fill="#c4c4c4"><path d="M4.500 0h3v4.500H12v3H7.500V12h-3V7.500H0v-3h4.500z" /></svg><span>Add</span><svg class="corner" width="6" height="3" viewBox="0 0 6 3" fill="#d0d0d0"><path d="M0 0h6L3 3z" /></svg></button>
              <button class="btn"><svg width="12" height="12" viewBox="0 0 12 12" fill="#c4c4c4"><path d="M0 4.500h12v3H0z" /></svg><span>Remove</span></button>
              <button class="btn push"><svg width="12" height="12" viewBox="0 0 16 16" fill="#c4c4c4" fill-rule="evenodd"><path :d="gearPath" /></svg><span>Setup</span></button>
            </div>
            <div class="filter-list"></div>
          </div>
        </div>

        <div class="external">
          <h2 class="tab-title">External Images</h2>
          <div class="group import-box">
            <button class="btn import"><svg width="14" height="12" viewBox="0 0 14 12" fill="#c4c4c4"><path d="M5 0h4v4h3L7 9 2 4h3zM0 8h4l3 3 3-3h4v4H0z" /></svg><span>Import</span></button>
          </div>
          <div class="highlight"></div>
        </div>
      </section>

      <main class="main">
        <div class="tabbar">
          <button class="btn setup-btn"><svg width="12" height="12" viewBox="0 0 16 16" fill="#d8c4c6" fill-rule="evenodd"><path :d="gearPath" /></svg><span>Setup</span></button>
          <div class="tabs" role="tablist">
            <button v-for="t in tabs" :key="t" role="tab" :class="{ active: t === activeTab }" @click="activeTab = t">{{ t }}</button>
          </div>
          <button class="btn inspect"><svg width="13" height="13" viewBox="0 0 13 13" fill="#b8b8b8"><path d="M0 11L10 1l2 2L2 13zM2 2h2v2H2zM5 0h2v2H5zM6 3h1v1H6zM11 6h1v1h-1z" /></svg><span>Inspect</span></button>
        </div>
        <div class="pane">
          <div class="toolbar">
            <button class="btn sq" aria-label="Select all"><svg width="14" height="13" viewBox="0 0 14 13" fill="none" stroke="#bebebe"><path d="M10 1.500H3a2 2 0 0 0-2 2v6a2 2 0 0 0 2 2h6a2 2 0 0 0 2-2V8" stroke-width="1.500" /><path d="M3.500 5L6 8l6.500-6.500" stroke-width="2.500" /></svg></button>
            <button class="btn sq" aria-label="Select none"><svg width="12" height="12" viewBox="0 0 12 12" fill="none" stroke="#bebebe"><rect x="1" y="1" width="10" height="10" rx="2" stroke-width="1.300" /></svg></button>
            <button class="btn sq" aria-label="Clear"><svg width="10" height="10" viewBox="0 0 10 10" stroke="#c8c8c8" stroke-width="3"><path d="M1 1l8 8M9 1L1 9" /></svg></button>
            <input class="field search" type="text" placeholder="Search..." aria-label="Search" />
            <button class="btn pointer"><svg width="12" height="12" viewBox="0 0 12 12" fill="none" stroke="#b4b4b4"><circle cx="6" cy="6" r="4" stroke-width="1.300" /><path d="M6 0v4M6 8v4M0 6h4M8 6h4" stroke-width="2" /></svg><span>Pointer overlay</span></button>
          </div>
          <div class="canvas">
            <figure v-for="m in maps" :key="m.name">
              <svg width="122" height="378" viewBox="0 0 122 378" shape-rendering="crispEdges">
                <path v-for="(p, i) in m.paths" :key="i" :d="p.d" :fill="p.fill" />
              </svg>
              <figcaption>{{ m.name }}</figcaption>
            </figure>
          </div>
        </div>
      </main>
    </div>
    <footer class="desk"><i></i><b></b></footer>
  </div>
</template>

<style>
body { margin: 0; background: #363636; }
</style>

<style scoped>
* { box-sizing: border-box; }
.window { min-height: 100vh; display: flex; flex-direction: column; background: #363636; color: #f0f0f0; font: 11px/14px "DejaVu Sans Condensed", "Noto Sans", sans-serif; }
button { font: inherit; color: inherit; border: 0; background: none; padding: 0; margin: 0; }
h2 { margin: 0; font-size: 14px; line-height: 20px; font-weight: 700; }

.titlebar { height: 23px; background: #fff; color: #000; display: flex; align-items: center; padding: 0 2px; font: 11px/16px "Noto Sans", sans-serif; }
.app-title { margin-left: 5px; flex: 1; }
.window-buttons { display: flex; height: 100%; }
.window-buttons button { width: 46px; display: flex; justify-content: center; align-items: center; padding-bottom: 2px; }
.menubar { height: 20px; display: flex; padding-left: 10px; gap: 14px; align-items: center; border-bottom: 1px solid #2d2d2d; font: 11px/16px "Noto Sans", sans-serif; }

.workspace { flex: 1; display: flex; }
.sidebar { width: 77px; background: #414141; border-right: 2px solid #b02a3d; display: flex; flex-direction: column; font: 12px/14px "Noto Sans", sans-serif; }
.trial { height: 37px; background: #4c7a4c; display: flex; flex-direction: column; align-items: center; justify-content: center; font-size: 9px; line-height: 11px; color: #fff; padding-bottom: 2px; }
.trial strong { font-size: 11px; line-height: 13px; }
.nav { height: 53px; display: flex; flex-direction: column; align-items: center; text-align: center; padding: 1px 1px 0 0; white-space: nowrap; }
.nav span { margin-top: 8px; }
.templates { margin-top: 2px; }
.current { background: #b02a3d; padding-top: 3px; }
.python { height: 63px; padding-top: 3px; }
.python span { margin-top: 3px; line-height: 15px; }
.messages { height: 48px; }
.spacer { flex: 1; }
hr { width: 65px; height: 1px; border: 0; background: #2c2c2c; margin: 1px auto 2px 6px; }

.setup { width: 320px; flex: none; padding: 9px 9px 0; border-right: 2px solid #b02a3d; }
.tab-title { width: fit-content; height: 20px; background: #b02a3d; border-radius: 6px 6px 0 0; padding: 0 5px; line-height: 22px; }
.group { border: 1px solid #b02a3d; background: #414141; padding: 6px 9px; }
.row { display: flex; align-items: center; height: 22px; margin-bottom: 6px; }
.lbl { flex: none; white-space: nowrap; padding-top: 1px; }
.w55 { width: 54px; }
.w61 { width: 60px; }
.w81 { width: 80px; }
.w34 { width: 34px; }
.toggle { display: flex; height: 21px; border: 1px solid #b02a3d; border-radius: 6px; overflow: hidden; font-size: 12px; }
.toggle label { display: flex; align-items: center; gap: 6px; padding: 0 6px; white-space: nowrap; }
.toggle .on { background: #b02a3d; padding-right: 8px; }
.toggle input { position: absolute; opacity: 0; width: 1px; height: 1px; margin: 0; }
.select { position: relative; flex: 1; height: 22px; border: 1px solid #282828; border-radius: 3px; background: linear-gradient(#4c4c4c, #434343); box-shadow: inset 0 0 0 1px #606060; }
.select select { appearance: none; width: 100%; height: 100%; border: 0; background: none; color: #f4f4f4; font: inherit; padding: 1px 0 0 3px; }
.select svg { position: absolute; right: 6px; top: 8px; fill: #c4c4c4; pointer-events: none; }
.field { flex: 1; min-width: 0; height: 22px; border: 1px solid #262626; border-radius: 3px; background: #2b2b2b; color: #f4f4f4; font: inherit; padding: 1px 2px 0; }
.field::placeholder { color: #9a9a9a; opacity: 1; }
.images { height: 160px; }
.spot-row { margin-top: 15px; }
.collapsed { margin: 6px 0; height: 20px; display: flex; justify-content: space-between; align-items: center; background: #414141; border-radius: 6px; padding-right: 2px; }
.collapsed h2 { background: #b02a3d; border-radius: 6px; padding: 0 5px; line-height: 21px; height: 20px; }
.collapsed button { height: 16px; }

.params { height: 371px; padding-top: 16px; }
.swatch { width: 75px; height: 23px; background: linear-gradient(#fff, #f4f4f4); border: 1px solid #d8d8d8; border-radius: 2px; display: flex; align-items: center; justify-content: center; }
.caption { margin-top: 2px; line-height: 14px; }
.frame { border: 1px solid #484848; border-radius: 2px; margin-left: 1px; }
.limits { margin-top: 3px; padding: 4px 5px 0 4px; height: 60px; }
.limits .lbl { width: 33px; }
.short { flex: none; width: 115px; margin-right: 4px; }
.filters-caption { margin-top: 8px; }
.filters { margin-top: 3px; padding: 10px 11px 0 10px; height: 131px; }
.filter-buttons { display: flex; gap: 6px; }
.btn { height: 22px; display: flex; align-items: center; gap: 6px; padding: 0 6px; white-space: nowrap; border: 1px solid #2a2a2a; border-radius: 3px; background: linear-gradient(#525252, #444); box-shadow: inset 0 0 0 1px #606060; color: #f2f2f2; }
.btn span { padding-top: 1px; }
.btn svg { flex: none; }
.add { position: relative; padding-right: 8px; }
.corner { position: absolute; right: 2px; bottom: 3px; }
.push { margin-left: auto; }
.filter-list { margin-top: 6px; height: 80px; background: #2b2b2b; }

.external { position: relative; padding-top: 9px; }
.import-box { height: 44px; padding: 9px; }
.import { width: 100%; height: 24px; justify-content: center; gap: 1px; }
.highlight { position: absolute; left: -9px; right: -15px; top: -1px; height: 94px; border: 5px solid #cb0000; pointer-events: none; z-index: 2; }

.main { flex: 1; min-width: 0; display: flex; flex-direction: column; padding-left: 1px; }
.tabbar { height: 23px; display: grid; grid-template-columns: 1fr auto 1fr; align-items: end; padding: 0 3px 0 1px; }
.setup-btn { justify-self: start; height: 20px; background: #a03c4c; box-shadow: inset 0 0 0 1px #b05c68; border-color: #6c2834; padding: 0 10px 0 5px; gap: 6px; }
.inspect { justify-self: end; height: 20px; padding: 0 8px 0 5px; gap: 5px; }
.tabs { display: flex; align-items: flex-end; gap: 1px; }
.tabs button { height: 20px; padding: 1px 10px 0; background: linear-gradient(#444, #3c3c3c); border: 1px solid #5a5a5a; border-bottom: 0; border-radius: 2px 2px 0 0; }
.tabs .active { height: 23px; background: #4a4a4a; position: relative; z-index: 1; margin-bottom: -1px; padding-bottom: 0; border-color: #646464; }
.pane { flex: 1; display: flex; flex-direction: column; background: #4a4a4a; border: 1px solid #646464; padding: 0 4px 2px 3px; }
.toolbar { height: 33px; display: flex; align-items: center; gap: 3px; padding: 4px 3px 0; }
.toolbar .btn { height: 23px; }
.sq { width: 24px; padding: 0; justify-content: center; }
.search { height: 23px; }
.pointer { margin-left: 1px; padding: 0 8px 0 5px; gap: 4px; }
.canvas { flex: 1; background: #2c2c2c; display: flex; flex-wrap: wrap; align-content: flex-start; }
figure { position: relative; margin: 0; width: 122px; height: 378px; }
figure svg { display: block; overflow: visible; }
figcaption { position: absolute; left: 9px; top: 15px; color: #fff; }
.desk { height: 3px; background: #050505; display: flex; }
.desk i { margin-left: 48px; width: 344px; background: #f4f4f4; }
.desk b { margin-left: 247px; width: 48px; background: #3c3c3c; }
</style>
